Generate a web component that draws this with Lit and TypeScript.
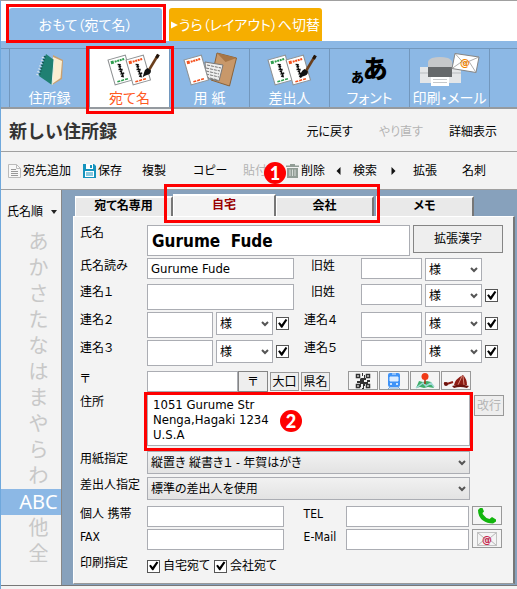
import { LitElement, html, svg, css, TemplateResult, nothing } from "lit";
import { customElement, property } from "lit/decorators.js";
import { classMap } from "lit/directives/class-map.js";

const postcard = (x: number, y: number, color: string, lines: boolean) => svg`
  <g transform="translate(${x} ${y}) rotate(-16)">
    <rect width="18" height="26" fill="#fff" stroke="#8d9092" />
    <rect x="2" y="2" width="3" height="3" fill=${color} />
    <path d="M6 3.500h10" stroke=${color} stroke-width="2" stroke-dasharray="2 .6" />
    <path d="M3 23.500h12" stroke=${color} stroke-width="1.500" stroke-dasharray="3 1" />
    ${lines
      ? svg`<path d="M8 7l3 1M8 9.500h3M9.500 8v4M7.500 12l4 1M8 14.500l3-.5M9.500 13v4M8 17h4M8 19.500l3-1M10 17v4"
          stroke="#111" stroke-width="1.400" fill="none" />`
      : nothing}
  </g>`;

const brush = (x: number, y: number) => svg`
  <g transform="translate(${x} ${y})">
    <path d="M15 0l-9 15" stroke="#6b3f1c" stroke-width="2.600" />
    <path d="M15.500-.5l-2 3.500" stroke="#22150c" stroke-width="3" />
    <path d="M4.500 13l3.500 2.500c0 3-2 4-4 4.500-2 .6-3 1.500-4.500 2.500C.5 20 1 17 2 15z" fill="#111" />
  </g>`;

const icons: Record<string, TemplateResult> = {
  play: html`<svg width="8" height="8" viewBox="0 0 8 8" aria-hidden="true"><path d="M0 0l8 4-8 4z" fill="#fff" /></svg>`,
  book: html`<svg class="pic" viewBox="0 0 60 34" aria-hidden="true">
    <path d="M33 2l10 5-1 19-10 6z" fill="#c9a071" />
    <path d="M33 4l9 4-1.500 17L32 31z" fill="#fbeed1" />
    <path d="M26 1l8 6-2 25-13-9z" fill="#1f8072" />
    <path d="M25 3l-6 20" stroke="#145a50" stroke-width="2" stroke-dasharray="1.500 1.500" />
    <path d="M23 4l-6 19" stroke="#dfe8e8" stroke-width="2" stroke-dasharray="1 2" />
    <path d="M34 7l-2 25" stroke="#e9f2ea" />
  </svg>`,
  cards: html`<svg class="pic" viewBox="0 0 60 34" aria-hidden="true">
    ${postcard(8, 7, "#2f9e4f", true)}${postcard(26, 7, "#f4511e", true)}${brush(43, 2)}
  </svg>`,
  sender: html`<svg class="pic" viewBox="0 0 60 34" aria-hidden="true">
    ${postcard(8, 7, "#2f9e4f", true)}${postcard(26, 7, "#f4511e", true)}${brush(40, 3)}
  </svg>`,
  paper: html`<svg class="pic" viewBox="0 0 60 34" aria-hidden="true">
    <path d="M37 0l19.500 5-7 28L31 27z" fill="#c8986a" stroke="#8a6238" />
    <path d="M37 0l19.500 5-11 4z" fill="#a87646" />
    <path d="M25 9l18 3-4 16-13-3z" fill="#eee" stroke="#777" />
    <path d="M27 12l14 3M26 15l14 3M26 18l13 3M26 21l13 3M26 24l12 3" stroke="#777" stroke-dasharray="3 1" />
    ${postcard(4, 7, "#f4511e", false)}
  </svg>`,
  font: html`<svg class="pic glyph" viewBox="0 0 60 34" aria-hidden="true">
    <text x="11" y="29" font-size="13">あ</text>
    <text x="23" y="25" font-size="25">あ</text>
  </svg>`,
  printer: html`<svg class="pic" viewBox="0 0 60 34" aria-hidden="true">
    <path d="M8 14V9q0-2 4-4 8-2 16 0 4 2 4 4v5z" fill="#c6c8ca" />
    <path d="M0 14h41v16H0z" fill="#e4e6e8" />
    <path d="M0 20h8M32 20h9" stroke="#b9bcbf" />
    <path d="M8 14h24v10H8z" fill="#66696b" />
    <path d="M11 24h18v9H11z" fill="#fff" />
    <path d="M13 26.500h14M13 29.500h14" stroke="#c6c8ca" />
    <path d="M35 .5l24 3.500-3 15.500-24-4z" fill="#fff" stroke="#858585" />
    <path d="M35 .5l9 10L59 4M32 15.500l10-7M56 19.500l-7-11" fill="none" stroke="#999" stroke-width=".8" />
    <text x="40" y="13" font-size="11" font-weight="700" fill="#f08300">@</text>
  </svg>`,
  page: html`<svg width="13" height="14" viewBox="0 0 13 14" aria-hidden="true">
    <path d="M.5.5h8l4 4v9H.5z" fill="#f8f8f8" stroke="#bbb" />
    <path d="M8.500.5v4h4" fill="none" stroke="#bbb" />
    <path d="M3 5.500h5M3 7.500h7M3 9.500h7M3 11.500h7" stroke="#999" />
  </svg>`,
  save: html`<svg width="13" height="14" viewBox="0 0 13 14" aria-hidden="true">
    <path d="M0 0h11l2 2v12H0z" fill="#1593bd" />
    <path d="M3 0h7v5H3z" fill="#fff" /><path d="M7 1h2v3H7z" fill="#1593bd" />
    <path d="M2 7h9v6H2z" fill="#fff" /><path d="M3 9h7M3 11h7" stroke="#1593bd" />
  </svg>`,
  trash: html`<svg width="13" height="14" viewBox="0 0 13 14" aria-hidden="true">
    <path d="M0 1.500h4V0h5v1.500h4V3H0zM1 4h11v10H1z" fill="#929d96" />
    <path d="M4 5.500V12M6.500 5.500V12M9 5.500V12" stroke="#d7dcd8" />
  </svg>`,
  left: html`<svg width="5" height="8" viewBox="0 0 5 8" aria-hidden="true"><path d="M4.500 0v8L.5 4z" fill="#111" /></svg>`,
  right: html`<svg width="5" height="8" viewBox="0 0 5 8" aria-hidden="true"><path d="M.5 0v8l4-4z" fill="#111" /></svg>`,
  qr: html`<svg width="16" height="16" viewBox="0 0 16 16" aria-hidden="true">
    <path d="M1.500 1.500h3v3h-3zM11.500 1.500h3v3h-3zM1.500 11.500h3v3h-3zM11.500 11.500h3v3h-3z" fill="none" stroke="#333" stroke-width="1.500" />
    <path d="M7 0h1v3H7zM9 2h1v3H9zM6 5h5v2H9v2h3V7h3v2h-2v2h-3v2H8v-2H6v3H5v-4H2V8h3V6zM8 13h1v3H7v-1h1z" fill="#333" />
  </svg>`,
  train: html`<svg width="16" height="16" viewBox="0 0 16 16" aria-hidden="true">
    <path d="M4 0h8q2 0 2 2v10q0 2-2 2H4q-2 0-2-2V2q0-2 2-2z" fill="#3f93f7" />
    <path d="M6 1h4M4 4h8v4H4z" fill="#dcecff" stroke="#dcecff" />
    <circle cx="5" cy="11" r="1" fill="#fff" /><circle cx="11" cy="11" r="1" fill="#fff" />
    <path d="M4 14l-2 2M12 14l2 2M3.500 15h9" stroke="#74a9df" />
  </svg>`,
  map: html`<svg width="20" height="16" viewBox="0 0 20 16" aria-hidden="true">
    <path d="M4 8l4 1 4-1 4 1 3 6-6-1-4 1-4-1-4 1z" fill="#3fae6b" />
    <path d="M1 15l7-5 3 3 5-3 3 4" fill="none" stroke="#9fd8d4" stroke-width="1.500" />
    <path d="M10 5v6" stroke="#a33012" stroke-width="1.500" /><circle cx="10" cy="3.500" r="3.500" fill="#f03a17" />
  </svg>`,
  cap: html`<svg width="26" height="16" viewBox="0 0 26 16" aria-hidden="true">
    <path d="M11 12q1-6 9-10 4 4 4 10z" fill="#8e1c14" />
    <path d="M19 3l-4 9M20 3l1 9" stroke="#d88a7c" />
    <path d="M9 13q8-3 17 0l-2 2q-7-2-13 0z" fill="#6d120d" />
    <path d="M1 10l3 1 6-2" stroke="#8e1c14" stroke-width="2" fill="none" /><circle cx="3" cy="11" r="2" fill="#6d120d" />
  </svg>`,
  phone: html`<svg width="20" height="16" viewBox="0 0 20 16" aria-hidden="true">
    <path d="M3 0L1 2q0 7 5 10.500 4 3 10 3l3-2v-2l-4-2.500-2.500 2Q9 10.500 7 7.500 5.500 6 5.500 5L7 3.500 5.500 0z" fill="#12b50d" />
  </svg>`,
  mail: html`<svg width="20" height="14" viewBox="0 0 20 14" aria-hidden="true">
    <path d="M.5.5h19v13H.5z" fill="#f4f4f4" stroke="#c2c2c2" />
    <path d="M.5.5l9.500 8 9.500-8M.5 13.500l7-6M19.500 13.500l-7-6" fill="none" stroke="#b5b5b5" />
    <text x="5" y="11" font-size="11" font-weight="700" fill="#c7254e">@</text>
  </svg>`,
};

const shared = css`
  * { box-sizing: border-box; }
  button, input, select, textarea {
    margin: 0;
    font: inherit;
    color: inherit;
    border-radius: 0;
    font-feature-settings: inherit;
  }
`;

@customElement("pick-list")
class PickList extends LitElement {
  @property() value = "";
  @property() label = "";
  static styles = [shared, css`
    :host { display: block; position: relative; height: 23px; }
    select {
      appearance: none;
      display: block;
      width: 100%;
      height: 23px;
      padding: 0 18px 0 3px;
      border: 1px solid #abadb3;
      background: var(--list-fill, #fff);
    }
    svg { position: absolute; right: 4px; top: 9px; pointer-events: none; }
  `];
  render() {
    return html`<select aria-label=${this.label}><option>${this.value}</option></select>
      <svg width="8" height="6" viewBox="0 0 8 6" aria-hidden="true">
        <path d="M1 1l3 3 3-3" fill="none" stroke="#555" stroke-width="2" />
      </svg>`;
  }
}

@customElement("app-root")
class AppRoot extends LitElement {
  static styles = [shared, css`
    :host {
      display: block;
      font: 12px/16px "DejaVu Sans Condensed", "Noto Sans CJK JP", sans-serif;
      font-feature-settings: "palt";
      color: #000;
    }
    .app {
      min-height: 100vh;
      background: #f3f3f3;
      border-top: 1px solid #a0a0a0;
      border-left: 1px solid #6fa8dc;
    }
    button { padding: 0; border: 0; background: none; white-space: nowrap; }
    .frame {
      position: absolute;
      border: 3px solid #fe0000;
      pointer-events: none;
      z-index: 2;
    }

    .sides { display: flex; gap: 7px; padding: 7px 8px 0; background: #fff; }
    .side {
      position: relative;
      display: flex;
      align-items: center;
      gap: 1px;
      width: 153px;
      height: 33px;
      padding: 0 2px;
      border-radius: 3px 3px 0 0;
      color: #fff;
      font-size: 14px;
      background: #f6ae00;
    }
    .side.front { justify-content: center; background: #8cb8e5; }
    .side .frame { inset: -4px -4px -2px -3px; }

    .nav {
      display: flex;
      padding: 7px 0 0 0;
      background: #8cb8e5;
      border-bottom: 2px solid #959a9f;
    }
    .nav::before { content: ""; width: 8px; border-top: 1px solid #7297bd; }
    .nav::after { content: ""; flex: 1; border-top: 1px solid #7297bd; border-left: 1px solid #7297bd; }
    .item {
      position: relative;
      display: flex;
      flex-direction: column;
      align-items: center;
      gap: 3px;
      width: 80px;
      height: 59px;
      padding-top: 4px;
      border-top: 1px solid #7297bd;
      border-left: 1px solid #7297bd;
      color: #fff;
      font-size: 14px;
    }
    .item.on { background: #fff; color: #ff5a1f; }
    .item .frame { inset: -3px -5px -7px -4px; }
    .pic { width: 60px; height: 34px; overflow: visible; }
    .glyph { font-family: "Noto Sans CJK JP", sans-serif; font-weight: 900; }

    .head {
      display: flex;
      align-items: center;
      height: 43px;
      padding: 4px 20px 0 8px;
      border-bottom: 1px solid #a0a0a0;
    }
    h1 { flex: 1; margin: 0; font-size: 18px; line-height: 24px; color: #333; font-feature-settings: normal; }
    .edit { display: flex; gap: 26px; }
    button:disabled { color: #b4b4b4; }

    .tools {
      display: grid;
      grid-template-columns: 75fr 59fr 51fr 50fr 43fr 50fr 17fr 38fr 22fr 49fr 55fr;
      align-items: center;
      height: 38px;
      padding-left: 7px;
      border-bottom: 1px solid #a0a0a0;
    }
    .tool { position: relative; display: flex; align-items: center; gap: 2px; justify-self: start; }
    .badge {
      position: absolute;
      width: 22px;
      height: 22px;
      border-radius: 50%;
      background: #fe0000;
      color: #fff;
      font: 900 18px/22px Lato, sans-serif;
      text-align: center;
      z-index: 3;
    }
    .tool .badge { left: 21px; top: -1px; }

    .main { display: flex; background: #87a1bc; border-bottom: 1px solid #777; }
    .index { width: 61px; background: #f3f3f3; border-right: 1px solid #888; }
    .sort { display: flex; align-items: center; gap: 8px; height: 39px; padding: 4px 0 0 6px; }
    .key {
      display: block;
      width: 100%;
      height: 26px;
      padding-left: 15px;
      color: #c8c8c8;
      font-size: 20px;
      line-height: 26px;
      text-align: center;
      font-feature-settings: normal;
    }
    .key.on { background: #8cb8e5; color: #fff; font-family: "Noto Sans", sans-serif; }

    .pane { flex: 1; min-width: 0; padding: 0 2px 1px 11px; }
    .tabs { display: flex; align-items: flex-end; height: 26px; padding-left: 2px; }
    .pair { position: relative; display: flex; align-items: flex-end; margin-right: 2px; }
    .pair .frame { inset: -10px -6px -7px -9px; }
    .tab {
      width: 98px;
      height: 20px;
      padding-bottom: 3px;
      border-top: 2px solid #fff;
      border-left: 1px solid #fff;
      border-right: 2px solid #777;
      background: #e9e9e9;
      font-weight: 700;
    }
    .tab.on { width: 103px; height: 22px; background: #f3f3f3; color: #900; }

    .form {
      display: flex;
      flex-direction: column;
      gap: 5px;
      padding: 8px 9px 7px 6px;
      background: #f3f3f3;
      border: 1px solid #fff;
      border-right: 2px solid #777;
      border-bottom-color: #999;
    }
    .group { display: flex; flex-direction: column; gap: 2px; }
    .row { display: flex; align-items: flex-start; gap: 3px; min-height: 21px; }
    .row.mid { min-height: 24px; }
    .row.tall { min-height: 26px; }
    .cap { flex: 0 0 67px; margin-right: -3px; }
    .cap2 { width: 54px; }
    .cap2.in { width: 47px; margin-left: 14px; }
    .cap2.out { margin-left: 12px; }
    .cap3 { width: 39px; margin-left: 17px; }
    .box {
      flex: 1;
      min-width: 0;
      height: 21px;
      padding: 0 3px;
      border: 1px solid #abadb3;
      background: #fff;
      font-size: 13px;
    }
    .box.deep { height: 26px; }
    .box.short { flex: 0 0 61px; }
    .box.first { flex: 137; }
    .box.second { flex: 123; }
    .box.name { height: 31px; padding: 0 4px; font-size: 17px; font-weight: 700; white-space: pre; }
    .list { flex: 0 0 57px; }
    .long { --list-fill: linear-gradient(#f1f1f1, #e3e3e3); flex: 1; margin-right: 34px; }
    .slot { display: flex; align-items: center; height: 23px; }
    .slot.last { flex: 0 0 19px; }
    .tick {
      appearance: none;
      width: 13px;
      height: 13px;
      border: 1px solid #555;
      background: #fff;
    }
    .tick:checked::before {
      content: "";
      display: block;
      height: 11px;
      background: #000;
      clip-path: polygon(10% 48%, 25% 38%, 42% 58%, 78% 8%, 94% 18%, 48% 88%, 38% 88%);
    }
    .push { border: 1px solid #999; background: #eee; height: 21px; }
    .push.wide { width: 90px; height: 28px; border-color: #858585; margin-right: 1px; }
    .push.zip { width: 30px; margin-left: -3px; border-color: #858585; }
    .push.mini { width: 29px; height: 19px; margin-top: 1px; margin-left: -1px; }
    .icons { display: flex; gap: 1px; margin: 0 33px 0 15px; }
    .icon { display: grid; place-items: center; width: 30px; height: 19px; border: 1px solid #999; background: #f5f5f5; }
    .icon.end { margin-right: 2px; }
    .address { position: relative; flex: 1; height: 52px; }
    .address .frame { inset: -2px -3px -5px -3px; }
    .address .badge { left: 133px; top: 16px; }
    textarea {
      display: block;
      width: 100%;
      height: 52px;
      padding: 2px 5px;
      border: 1px solid #abadb3;
      background: #fff;
      resize: none;
      overflow: hidden;
      font-size: 13px;
      line-height: 15px;
    }
    .break { width: 30px; margin-top: 1px; margin-left: 1px; }
    .check { display: flex; align-items: center; gap: 3px; margin: 3px 1px 0 0; }
  `];

  private rename(n: string, m: string) {
    return html`<div class="row tall">
      <label class="cap" for="j${n}">連名${n}</label>
      <input class="box deep" id="j${n}" />
      <pick-list class="list" value="様" label="敬称"></pick-list>
      <span class="slot"><input class="tick" type="checkbox" checked aria-label="連名${n}を印刷" /></span>
      <label class="cap2 out" for="j${m}">連名${m}</label>
      <input class="box short deep" id="j${m}" />
      <pick-list class="list" value="様" label="敬称"></pick-list>
      <span class="slot last"><input class="tick" type="checkbox" checked aria-label="連名${m}を印刷" /></span>
    </div>`;
  }

  private contact(a: string, b: string, icon: string) {
    return html`<div class="row">
      <label class="cap" for="l-${icon}">${a}</label>
      <input class="box first" id="l-${icon}" />
      <label class="cap3" for="r-${icon}">${b}</label>
      <input class="box second" id="r-${icon}" />
      <button class="icon end" aria-label=${b}>${icons[icon]}</button>
    </div>`;
  }

  render() {
    const nav = [
      ["book", "住所録"], ["cards", "宛て名"], ["paper", "用 紙"],
      ["sender", "差出人"], ["font", "フォント"], ["printer", "印刷・メール"],
    ];
    const keys = ["あ", "か", "さ", "た", "な", "は", "ま", "や", "ら", "わ", "ABC", "他", "全"];
    return html`<div class="app" lang="ja">
      <div class="sides">
        <button class="side front">おもて（宛て名）<span class="frame"></span></button>
        <button class="side">${icons.play}うら（レイアウト）へ切替</button>
      </div>
      <nav class="nav">
        ${nav.map(([icon, text]) => html`<button class=${classMap({ item: true, on: icon === "cards" })}>
          ${icons[icon]}<span>${text}</span>${icon === "cards" ? html`<span class="frame"></span>` : nothing}
        </button>`)}
      </nav>
      <header class="head">
        <h1>新しい住所録</h1>
        <div class="edit">
          <button>元に戻す</button><button disabled>やり直す</button><button>詳細表示</button>
        </div>
      </header>
      <div class="tools">
        <button class="tool">${icons.page}宛先追加</button>
        <button class="tool">${icons.save}保存</button>
        <button class="tool">複製</button>
        <button class="tool">コピー</button>
        <button class="tool" disabled>貼付<span class="badge">1</span></button>
        <button class="tool">${icons.trash}削除</button>
        <button class="tool" aria-label="前へ">${icons.left}</button>
        <button class="tool">検索</button>
        <button class="tool" aria-label="次へ">${icons.right}</button>
        <button class="tool">拡張</button>
        <button class="tool">名刺</button>
      </div>
      <div class="main">
        <div class="index">
          <button class="sort">氏名順
            <svg width="6" height="4" viewBox="0 0 6 4" aria-hidden="true"><path d="M0 0h6L3 4z" fill="#222" /></svg>
          </button>
          ${keys.map((k) => html`<button class=${classMap({ key: true, on: k === "ABC" })}>${k}</button>`)}
        </div>
        <div class="pane">
          <div class="tabs">
            <button class="tab">宛て名専用</button>
            <div class="pair">
              <button class="tab on">自宅</button><button class="tab">会社</button>
              <span class="frame"></span>
            </div>
            <button class="tab">メモ</button>
          </div>
          <form class="form" @submit=${(e: Event) => e.preventDefault()}>
            <div class="group">
              <div class="row">
                <label class="cap" for="name">氏名</label>
                <input class="box name" id="name" .value=${"Gurume  Fude"} />
                <button class="push wide">拡張漢字</button>
              </div>
              <div class="row mid">
                <label class="cap" for="kana">氏名読み</label>
                <input class="box" id="kana" .value=${"Gurume Fude"} />
                <label class="cap2 in" for="old0">旧姓</label>
                <input class="box short" id="old0" />
                <pick-list class="list" value="様" label="敬称"></pick-list>
                <span class="slot last"></span>
              </div>
              <div class="row tall">
                <label class="cap" for="j1">連名１</label>
                <input class="box deep" id="j1" />
                <label class="cap2 in" for="old1">旧姓</label>
                <input class="box short" id="old1" />
                <pick-list class="list" value="様" label="敬称"></pick-list>
                <span class="slot last"><input class="tick" type="checkbox" checked aria-label="連名１を印刷" /></span>
              </div>
              ${this.rename("２", "４")}${this.rename("３", "５")}
            </div>
            <div class="group">
              <div class="row">
                <label class="cap" for="zip">〒</label>
                <input class="box" id="zip" />
                <button class="push zip">〒</button>
                <button class="push mini">大口</button>
                <button class="push mini">県名</button>
                <div class="icons">
                  <button class="icon" aria-label="QR">${icons.qr}</button>
                  <button class="icon" aria-label="駅">${icons.train}</button>
                  <button class="icon" aria-label="地図">${icons.map}</button>
                  <button class="icon" aria-label="帽子">${icons.cap}</button>
                </div>
              </div>
              <div class="row">
                <label class="cap" for="addr">住所</label>
                <div class="address">
                  <textarea id="addr" .value=${"1051 Gurume Str\nNenga,Hagaki 1234\nU.S.A"}></textarea>
                  <span class="badge">2</span><span class="frame"></span>
                </div>
                <button class="push break" disabled>改行</button>
              </div>
            </div>
            <div class="group">
              <div class="row mid">
                <span class="cap">用紙指定</span>
                <pick-list class="long" value="縦置き 縦書き１ - 年賀はがき" label="用紙指定"></pick-list>
              </div>
              <div class="row mid">
                <span class="cap">差出人指定</span>
                <pick-list class="long" value="標準の差出人を使用" label="差出人指定"></pick-list>
              </div>
            </div>
            <div class="group">
              ${this.contact("個人 携帯", "TEL", "phone")}${this.contact("FAX", "E-Mail", "mail")}
            </div>
            <div class="row">
              <span class="cap">印刷指定</span>
              <label class="check"><input class="tick" type="checkbox" checked />自宅宛て</label>
              <label class="check"><input class="tick" type="checkbox" checked />会社宛て</label>
            </div>
          </form>
        </div>
      </div>
    </div>`;
  }
}
